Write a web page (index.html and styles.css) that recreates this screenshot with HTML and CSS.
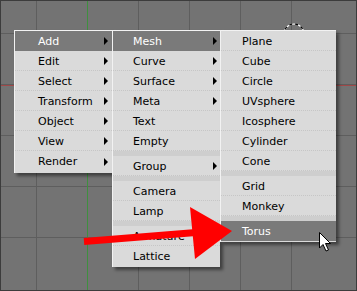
FILE: index.html
```html
<!DOCTYPE html>
<html>
<head>
<meta charset="utf-8">
<title>Add menu</title>
<link rel="stylesheet" href="styles.css">
</head>
<body>
<div class="view">
	<svg class="cursor3d" width="30" height="30" viewBox="0 0 30 30">
		<circle cx="15" cy="15" r="10" fill="none" stroke="#fff" stroke-width="1.2"/>
		<circle cx="15" cy="15" r="10" fill="none" stroke="#000" stroke-width="1.2" stroke-dasharray="3 3"/>
	</svg>

	<div class="menus">
		<ul class="menu m1">
			<li class="on">Add<i class="sub"></i></li>
			<li>Edit<i class="sub"></i></li>
			<li>Select<i class="sub"></i></li>
			<li>Transform<i class="sub"></i></li>
			<li>Object<i class="sub"></i></li>
			<li>View<i class="sub"></i></li>
			<li class="last">Render<i class="sub"></i></li>
		</ul>
		<ul class="menu m2">
			<li class="on">Mesh<i class="sub"></i></li>
			<li>Curve<i class="sub"></i></li>
			<li>Surface<i class="sub"></i></li>
			<li>Meta<i class="sub"></i></li>
			<li>Text</li>
			<li>Empty</li>
			<li class="sep"></li>
			<li>Group<i class="sub"></i></li>
			<li class="sep"></li>
			<li>Camera</li>
			<li>Lamp</li>
			<li class="sep"></li>
			<li>Armature</li>
			<li class="last">Lattice</li>
		</ul>
		<ul class="menu m3">
			<li>Plane</li>
			<li>Cube</li>
			<li>Circle</li>
			<li>UVsphere</li>
			<li>Icosphere</li>
			<li>Cylinder</li>
			<li>Cone</li>
			<li class="sep"></li>
			<li>Grid</li>
			<li>Monkey</li>
			<li class="sep"></li>
			<li class="on last">Torus</li>
		</ul>
	</div>

	<svg class="overlay" width="357" height="291" viewBox="0 0 357 291">
		<line x1="84" y1="241.5" x2="196" y2="232.5" stroke="#f00" stroke-width="7"/>
		<polygon points="190,207 232,231 195,259" fill="#f00"/>
		<path d="M319.5 232.5 L319.5 248 L323 244.5 L326 251 L328.5 250 L325.5 243.5 L330.5 243.5 Z" fill="#fff" stroke="#000" stroke-width="1" stroke-linejoin="miter"/>
	</svg>
</div>
</body>
</html>
```

FILE: styles.css
```css
*{margin:0;padding:0;box-sizing:border-box;}
body{background:#9a9a9a;}
.view{
	width:357px; height:291px; position:relative; overflow:hidden;
	border:1px solid #3c3c3c;
	background-color:#737373;
	background-image:
		linear-gradient(90deg, transparent 86px, #3f8f3f 86px, #3f8f3f 87px, transparent 87px),
		linear-gradient(180deg, transparent 84px, #a04848 84px, #a04848 85px, transparent 85px),
		repeating-linear-gradient(90deg, transparent 0, transparent 50px, #5e5e5e 50px, #5e5e5e 51px),
		repeating-linear-gradient(180deg, transparent 0, transparent 50px, #5e5e5e 50px, #5e5e5e 51px);
	background-position:0 0, 0 0, -15px 0, 0 -18px;
	font-family:"DejaVu Sans", Verdana, sans-serif;
	font-size:11px;
}
.cursor3d{position:absolute; left:278px; top:18px;}
.overlay{position:absolute; left:-1px; top:-1px; pointer-events:none;}

.menus{position:absolute; left:13px; top:29px; display:flex; align-items:flex-start;}
.menu{
	list-style:none; background:#dadada;
	border-top:1px solid #f2f2f2; border-left:1px solid #f2f2f2;
	padding-bottom:1px;
	box-shadow:3px 3px 3px rgba(0,0,0,.45);
}
.m1{width:98px; padding-bottom:2px;}
.m2{width:108px;}
.m3{width:116px;}
.menu li{
	height:20px; display:flex; align-items:center; justify-content:space-between;
	color:#000; border-bottom:1px dotted #c6c6c6;
}
.menu li.last{border-bottom:none;}
.m1 li{padding:1px 4px 0 23px;}
.m2 li{padding:1px 3px 0 20px;}
.m3 li{padding:1px 3px 0 21px;}
.menu li.on{background:#7a7a7a; color:#fff; border-bottom-color:#7a7a7a;}
.menu li.sep{height:5px; background:#cecece; border-bottom:none; padding:0;}
.sub{width:0; height:0; border-left:4px solid #000; border-top:4px solid transparent; border-bottom:4px solid transparent;}
```
